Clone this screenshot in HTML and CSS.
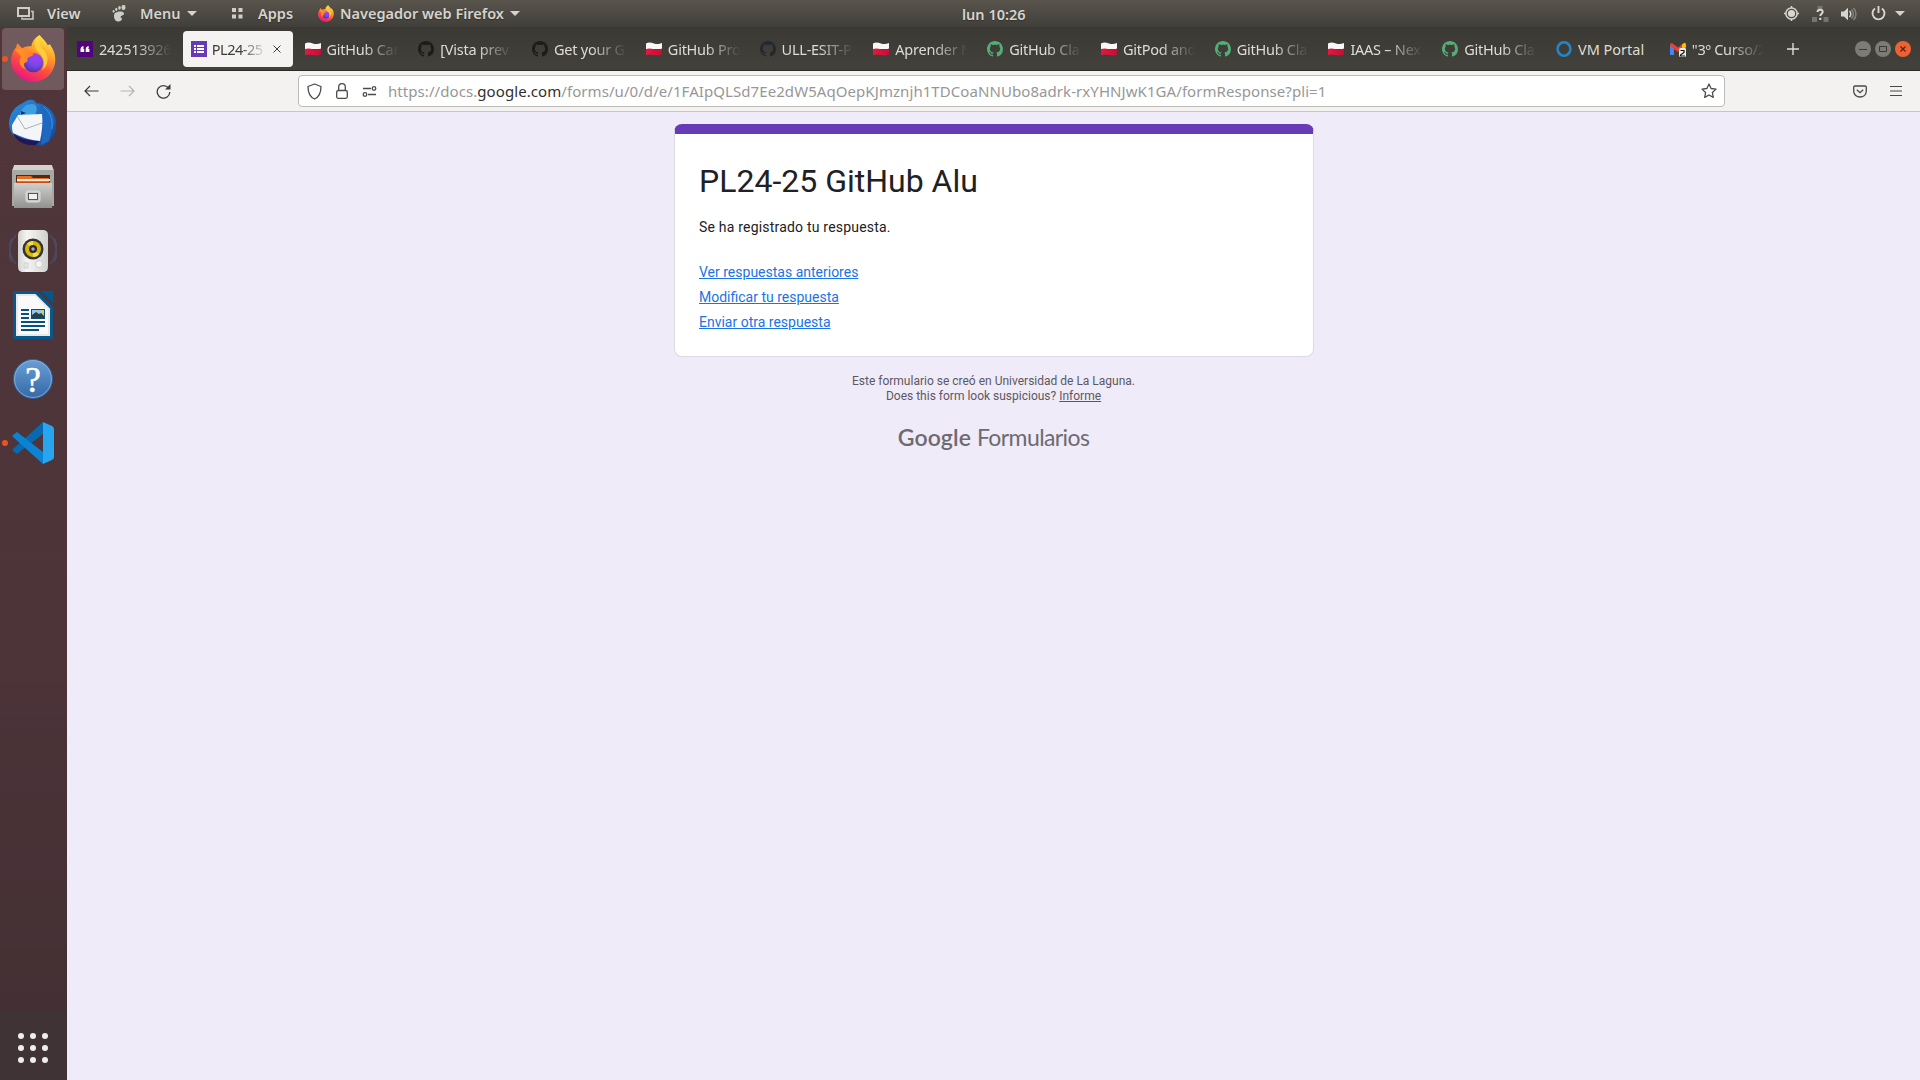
FILE: index.html
```
<!DOCTYPE html>
<html lang="es">
<head>
<meta charset="utf-8">
<title>PL24-25 GitHub Alu</title>
<link rel="stylesheet" href="styles.css">
</head>
<body>
<svg class="defs" width="0" height="0" aria-hidden="true">
  <defs>
    <linearGradient id="ff-body" x1="0.8" y1="0" x2="0.3" y2="1"><stop offset="0" stop-color="#fff14a"/><stop offset=".35" stop-color="#ffa02a"/><stop offset=".65" stop-color="#ff4b3e"/><stop offset="1" stop-color="#e5138a"/></linearGradient>
    <radialGradient id="ff-core" cx=".6" cy=".25" r=".8"><stop offset="0" stop-color="#a43df0"/><stop offset=".5" stop-color="#7a49e8"/><stop offset="1" stop-color="#4a2fa8"/></radialGradient>
    <linearGradient id="ff-fox" x1="0" y1="0" x2="1" y2="0"><stop offset="0" stop-color="#ff9a20"/><stop offset="1" stop-color="#ff7c2e"/></linearGradient>
    <linearGradient id="tb-body" x1="0" y1="0" x2="1" y2="1"><stop offset="0" stop-color="#2b8fdc"/><stop offset=".6" stop-color="#1c62b8"/><stop offset="1" stop-color="#173c8c"/></linearGradient>
    <linearGradient id="steel" x1="0" y1="0" x2="0" y2="1"><stop offset="0" stop-color="#cfcfcd"/><stop offset="1" stop-color="#929290"/></linearGradient>
    <linearGradient id="spk" x1="0" y1="0" x2="1" y2="0"><stop offset="0" stop-color="#d2d2d0"/><stop offset=".3" stop-color="#f5f5f4"/><stop offset="1" stop-color="#d0d0ce"/></linearGradient>
    <linearGradient id="help" x1="0" y1="0" x2="0" y2="1"><stop offset="0" stop-color="#6a9fd4"/><stop offset="1" stop-color="#3468a8"/></linearGradient>
    <linearGradient id="flag-red" x1="0" y1="0" x2="1" y2="0"><stop offset="0" stop-color="#e6173f"/><stop offset="1" stop-color="#c30f35"/></linearGradient>
    <symbol id="firefox" viewBox="0 0 44 46">
      <path d="M28 0c3 4 6 6 8 10l2-1c5 7 6 13 5 19-2 11-11 18-21 18S1 38 0 27c0-7 2-12 5-15l1-4 5 5c3-2 6-2 9-2 0-4 4-9 8-11z" fill="url(#ff-body)"/>
      <circle cx="22" cy="27" r="9.5" fill="url(#ff-core)"/>
      <path d="M4 14l7-1c3 1 5 4 8 4 2 0 3 1 3 2-1 2-5 2-6 4 0 2 1 3-2 4-2 1-2 4 1 7-7-3-8-8-5-13-2-2-4-4-6-7z" fill="url(#ff-fox)"/>
      <path d="M28 0c-8 7-5 14 0 18 4 4 6 10 2 17 9-7 6-17 1-21-3-4-4-8-3-14z" fill="#ffd83a" opacity=".8"/>
    </symbol>
    <symbol id="github" viewBox="0 0 16 16"><path fill="currentColor" d="M8 0C3.58 0 0 3.58 0 8c0 3.54 2.29 6.53 5.47 7.59.4.07.55-.17.55-.38 0-.19-.01-.82-.01-1.49-2.01.37-2.53-.49-2.69-.94-.09-.23-.48-.94-.82-1.13-.28-.15-.68-.52-.01-.53.63-.01 1.08.58 1.23.82.72 1.21 1.87.87 2.33.66.07-.52.28-.87.51-1.07-1.78-.2-3.64-.89-3.64-3.95 0-.87.31-1.59.82-2.15-.08-.2-.36-1.02.08-2.12 0 0 .67-.21 2.2.82.64-.18 1.32-.27 2-.27s1.36.09 2 .27c1.53-1.04 2.2-.82 2.2-.82.44 1.1.16 1.92.08 2.12.51.56.82 1.27.82 2.15 0 3.07-1.87 3.75-3.65 3.95.29.25.54.73.54 1.48 0 1.07-.01 1.93-.01 2.2 0 .21.15.46.55.38A8.01 8.01 0 0 0 16 8c0-4.42-3.58-8-8-8z"/></symbol>
    <symbol id="flag" viewBox="0 0 16 16"><path d="M0 2.500c3-1.500 5-.8 8 0s5 .7 8-.5v6H0z" fill="#f8f8f8"/><path d="M0 8c3-1 5-.5 8 .2s5 .4 8-.7v6c-3 1.300-5 1-8 .5s-5-1-8 .2z" fill="url(#flag-red)"/></symbol>
  </defs>
</svg>

<header class="topbar">
  <div class="topbar-left">
    <svg class="ic-view" width="17" height="14" viewBox="0 0 17 14" fill="none" stroke="#cfcdc7" stroke-width="1.500"><rect x="1" y="1" width="11" height="8" stroke-width="2"/><path d="M14 4.500h2V12H5v-1.500"/></svg>
    <span class="t-view">View</span>
    <svg class="ic-foot" width="14" height="17" viewBox="0 0 14 17" fill="#cfcdc7"><ellipse cx="11.500" cy="2.500" rx="2" ry="2.600"/><ellipse cx="7.500" cy="2.800" rx="1.300" ry="1.900"/><ellipse cx="4.300" cy="4.300" rx="1.100" ry="1.600"/><ellipse cx="1.600" cy="6.300" rx="1" ry="1.400"/><path d="M3 8c2-2 9-2.500 9 .5 0 2-3 2-3.500 3.500-.3 1 1.300.5 1.500 1.500 0 2-2.500 3.500-4.500 3C2 16 1 10 3 8z"/></svg>
    <span class="t-menu">Menu</span>
    <i class="caret"></i>
    <svg class="ic-apps" width="11" height="11" viewBox="0 0 11 11" fill="#cfcdc7"><path d="M0 0h4v4H0zM6.500 0h4v4h-4zM0 6.500h4v4H0zM6.500 6.500h4v4h-4z"/></svg>
    <span class="t-apps">Apps</span>
    <svg class="ic-ff" width="16" height="17"><use href="#firefox"/></svg>
    <span class="t-nav">Navegador web Firefox</span>
    <i class="caret"></i>
  </div>
  <span class="clock">lun 10:26</span>
  <div class="tray">
    <svg width="15" height="15" viewBox="0 0 15 15"><circle cx="7.500" cy="7.500" r="5.600" fill="none" stroke="#d8d6d0" stroke-width="1.500"/><circle cx="7.500" cy="7.500" r="3.600" fill="#d8d6d0"/><path d="M7.500 0v2M7.500 13v2M0 7.500h2M13 7.500h2" stroke="#d8d6d0" stroke-width="1.500"/></svg>
    <svg class="net" width="17" height="16" viewBox="0 0 17 16"><path d="M5.500 0h5v3h-5zM0 11h5v5H0zM11.500 11h5v5h-5z" fill="#77756f"/><path d="M5.500 6c.2-3.300 5.500-3 5.200 0-.2 1.700-2.400 1.900-2.400 4M8.300 11.800V14" stroke="#dad8d2" stroke-width="2" fill="none"/></svg>
    <svg class="vol" width="16" height="14" viewBox="0 0 16 14"><path d="M0 4.500h3L7 .8v12.400L3 9.500H0z" fill="#d8d6d0"/><path d="M8.500 4c1.700 1.600 1.700 4.400 0 6" stroke="#d8d6d0" stroke-width="1.500" fill="none"/><path d="M10.500 2.500c2.500 2.500 2.500 6.500 0 9M12.500 1c3.300 3.300 3.300 8.700 0 12" stroke="#85837c" stroke-width="1.500" fill="none"/></svg>
    <svg class="pow" width="15" height="15" viewBox="0 0 15 15" fill="none" stroke="#d8d6d0" stroke-width="1.900"><path d="M4 2.500a6 6 0 1 0 7 0M7.500 0v7"/></svg>
    <i class="caret"></i>
  </div>
</header>

<div class="desktop">
  <nav class="dock">
    <div class="app active"><i class="run"></i><svg width="45" height="47"><use href="#firefox"/></svg></div>
    <div class="app"><svg width="48" height="48" viewBox="0 0 48 48">
      <path d="M17 2c6-3 10 0 10 2C40 6 49 16 47 28c0 8-5 14-13 19l-4-1C12 45 1 38 0 25 0 14 7 7 12 5z" fill="url(#tb-body)"/>
      <path d="M23 5c6 0 6 7 2 12L10 22c-1-5 2-12 7-16z" fill="#3b9fe0"/><path d="M12 12l5 2-5 2z" fill="#1a335e"/>
      <path d="M30 4c10 3 15 11 15 20l-5 18-8 4 2-15-1-14z" fill="#1d69c0"/><path d="M35 8c6 5 9 12 8 22" stroke="#3a91df" fill="none"/>
      <path d="M4 34c7 6 17 8 27 8l-4 4C15 47 7 42 4 34z" fill="#221654"/>
      <path d="M3 26l6-10 24-1c1 9 0 18-2 27-10-1-19-4-27-8-1-3-1-6-1-8z" fill="#f4f5f6"/><path d="M8 17l8 13 17-6" fill="none" stroke="#aab2ba"/></svg></div>
    <div class="app"><svg width="42" height="44" viewBox="0 0 42 44">
      <path d="M2 1h38l2 4v36H0V5z" fill="#a8a8a6"/><path d="M2 0h38l1 5H1z" fill="#d2d2d0"/><path d="M4 10h34v9H4z" fill="#4c2c19"/><path d="M5 11h14l2 2h16v7H5z" fill="#e46d22"/><path d="M5 14h33v2H5z" fill="#fbe8cf"/><path d="M4 17h34v2H4z" fill="#c84c15"/>
      <path d="M2 18h38v25H2z" fill="url(#steel)"/><rect x="14" y="26" width="14" height="11" rx="2" fill="#c9c9c7" stroke="#dededd"/><rect x="16.500" y="28.500" width="9" height="6" fill="#f1f1f0" stroke="#555"/></svg></div>
    <div class="app"><svg width="48" height="44" viewBox="0 0 48 44">
      <path d="M7 6c-8 9-8 20 0 29M3 9c-4 8-4 17 0 24M41 6c8 9 8 20 0 29M45 9c4 8 4 17 0 24" stroke="#4b4a63" stroke-width="1.500" fill="none"/>
      <path d="M13 1h22c4 1 4 3 4 8v27c0 5-1 7-5 7H14c-4 0-5-2-5-7V9c0-5 0-7 4-8z" fill="url(#spk)"/><circle cx="24" cy="20" r="10.500" fill="#343434"/><circle cx="24" cy="20" r="8" fill="#d8b50b"/><path d="M24 20L18 14.500a8 8 0 0 1 6-2.500zM24 20l6 5.500a8 8 0 0 1-6 2.500z" fill="#f6dc4b"/><circle cx="24" cy="20" r="4" fill="#2a2b2c"/><circle cx="24" cy="20" r="1.700" fill="#a9b0b3"/><circle cx="30" cy="35" r="3.500" fill="#f4f4f3" stroke="#cfcfcd"/><rect x="15" y="34" width="4" height="5" fill="#e4e4e2" stroke="#d2d2d0"/></svg></div>
    <div class="app"><svg width="40" height="48" viewBox="0 0 40 48">
      <path d="M2 0h22l16 16v30q0 2-2 2H2q-2 0-2-2V2q0-2 2-2z" fill="#09588d"/><path d="M27 0h13v12z" fill="#06558b"/><path d="M3 3h19.500L37 17.500V45H3z" fill="#e9e9e8"/><path d="M5 5h17l13 13v25H5z" fill="#fafafa"/><path d="M8 18h8v2H8zM8 22h8v2H8zM8 26h8v2H8zM8 30h24v2H8zM8 34h24v2H8zM8 38h18v2H8z" fill="#08507f"/><path d="M18 18h14v10H18z" fill="#08507f"/><path d="M19 19h12v8H19z" fill="#8ecbed"/><path d="M19 27v-3l4-3 3 2 2-1 3 3v2z" fill="#363b3c"/><circle cx="29.500" cy="20.500" r="1.500" fill="#eecb38"/></svg></div>
    <div class="app"><svg width="40" height="40" viewBox="0 0 40 40"><circle cx="20" cy="20" r="19.500" fill="url(#help)" stroke="#315f99"/><circle cx="20" cy="20" r="18.400" fill="none" stroke="#8bb5df" stroke-width=".8"/><text class="q" x="20" y="33" text-anchor="middle">?</text></svg></div>
    <div class="app"><i class="run"></i><svg width="42" height="42" viewBox="0 0 42 42"><path d="M31 0v12L5 32l-4-3q-1-1 0-2z" fill="#0769b0"/><path d="M31 42V30L5 10l-4 3q-1 1 0 2z" fill="#0a84d2"/><path d="M31 0l9 4q2 1 2 3v28q0 2-2 3l-9 4z" fill="#27a6ef"/></svg></div>
    <div class="show-apps"><i></i><i></i><i></i><i></i><i></i><i></i><i></i><i></i><i></i></div>
  </nav>

  <div class="window">
    <div class="tabs">
      <div class="tab"><svg viewBox="0 0 16 16"><path d="M0 0h16v16H0z" fill="#54047a"/><path d="M3.500 11V8.500C3.500 6.500 4.500 5.300 6.500 5v2l-.8.800h1.500V11zM8.700 11V8.500c0-2 1-3.200 3-3.500v2l-.8.800h1.500V11z" fill="#fff"/></svg><span class="label">242513926</span></div>
      <div class="tab selected"><svg viewBox="0 0 16 16"><path d="M0 0h16v16H0z" fill="#673ab7"/><path d="M3 4h2v2H3zM6 4h7v2H6zM3 7h2v2H3zM6 7h7v2H6zM3 10h2v2H3zM6 10h7v2H6z" fill="#fff"/></svg><span class="label">PL24-25</span><svg class="close" viewBox="0 0 8 8"><path d="M.5.5l7 7M7.500.5l-7 7" stroke="#3c3c3c" stroke-width="1"/></svg></div>
      <div class="tab"><svg><use href="#flag"/></svg><span class="label">GitHub Car</span></div>
      <div class="tab gh-black"><svg><use href="#github"/></svg><span class="label">[Vista prev</span></div>
      <div class="tab gh-black"><svg><use href="#github"/></svg><span class="label">Get your G</span></div>
      <div class="tab"><svg><use href="#flag"/></svg><span class="label">GitHub Pro</span></div>
      <div class="tab gh-navy"><svg><use href="#github"/></svg><span class="label">ULL-ESIT-P</span></div>
      <div class="tab"><svg><use href="#flag"/></svg><span class="label">Aprender N</span></div>
      <div class="tab gh-green"><svg><use href="#github"/></svg><span class="label">GitHub Cla</span></div>
      <div class="tab"><svg><use href="#flag"/></svg><span class="label">GitPod and</span></div>
      <div class="tab gh-green"><svg><use href="#github"/></svg><span class="label">GitHub Cla</span></div>
      <div class="tab"><svg><use href="#flag"/></svg><span class="label">IAAS – Nex</span></div>
      <div class="tab gh-green"><svg><use href="#github"/></svg><span class="label">GitHub Cla</span></div>
      <div class="tab"><svg viewBox="0 0 16 16"><ellipse cx="8" cy="8" rx="6.400" ry="6.700" fill="none" stroke="#2585c7" stroke-width="2.600"/></svg><span class="label full">VM Portal</span></div>
      <div class="tab"><svg viewBox="0 0 16 16"><path d="M0 4v10h4V7z" fill="#4285f4"/><path d="M12 7v7h4V4z" fill="#34a853"/><path d="M0 4q0-2 2-2l6 4.500L14 2v4L8 11 0 5z" fill="#e94235"/><path d="M12 3.500Q16 0 16 4v2l-4 2.500z" fill="#fbbc04"/><rect x="9" y="7" width="7" height="9" rx="1.500" fill="#e9eee9"/><path d="M10.500 9.500h3.500v2l-3.500 2.500V15h4.500" fill="none" stroke="#111" stroke-width="1.200"/></svg><span class="label">"3º Curso/2</span></div>
      <svg class="plus" viewBox="0 0 12 12"><path d="M6 0v12M0 6h12" stroke="#e0ded6" stroke-width="1.400"/></svg>
      <div class="controls">
        <svg viewBox="0 0 16 16"><circle cx="8" cy="8" r="8" fill="#7d7b75"/><path d="M4 8.500h8" stroke="#3a3935"/></svg>
        <svg viewBox="0 0 16 16"><circle cx="8" cy="8" r="8" fill="#7d7b75"/><path d="M4.500 5.500h7v5h-7z" fill="none" stroke="#3a3935"/></svg>
        <svg viewBox="0 0 16 16"><circle cx="8" cy="8" r="8" fill="#ee6132"/><path d="M5.500 5.500l5 5M10.500 5.500l-5 5" stroke="#5b2010" stroke-width="1.200"/></svg>
      </div>
    </div>

    <div class="toolbar">
      <div class="nav-buttons">
        <svg width="15" height="12" viewBox="0 0 15 12" fill="none" stroke="#3b3b3b" stroke-width="1.200"><path d="M14.500 6H1M6 1L1 6l5 5"/></svg>
        <svg width="15" height="12" viewBox="0 0 15 12" fill="none" stroke="#b4b3b1" stroke-width="1.200"><path d="M.5 6H14M9 1l5 5-5 5"/></svg>
        <svg width="15" height="15" viewBox="0 0 15 15" fill="none" stroke="#3b3b3b" stroke-width="1.300"><path d="M12.500 4A6.300 6.300 0 1 0 13.800 8"/><path d="M9 5.500h5.500V0z" fill="#3b3b3b" stroke="none"/></svg>
      </div>
      <div class="urlbar">
        <svg width="15" height="17" viewBox="0 0 15 17" fill="none" stroke="#4b4b4b" stroke-width="1.300"><path d="M7.500 1L1 3.500C1 10 3 14 7.500 16 12 14 14 10 14 3.500z" stroke-linejoin="round"/></svg>
        <svg class="lock" width="12" height="16" viewBox="0 0 12 16" fill="none" stroke="#4b4b4b" stroke-width="1.300"><rect x=".7" y="7.500" width="10.600" height="7.800" rx="1.500"/><path d="M2.700 7.500V4a3.300 3.300 0 0 1 6.600 0v3.500"/></svg>
        <svg class="perm" width="15" height="11" viewBox="0 0 15 11" fill="none" stroke="#4b4b4b" stroke-width="1.300"><path d="M1 2.500h8M6 8.500h8"/><circle cx="12" cy="2.500" r="1.800"/><circle cx="3" cy="8.500" r="1.800"/></svg>
        <span class="url">https://docs.<b>google.com</b>/forms/u/0/d/e/1FAIpQLSd7Ee2dW5AqOepKJmznjh1TDCoaNNUbo8adrk-rxYHNJwK1GA/formResponse?pli=1</span>
        <svg class="star" width="16" height="16" viewBox="0 0 16 16" fill="none" stroke="#4b4b4b" stroke-width="1.300" stroke-linejoin="round"><path d="M8 1l2.100 4.500 4.900.6-3.600 3.400.9 4.900L8 12l-4.300 2.400.9-4.900L1 6.100l4.900-.6z"/></svg>
      </div>
      <svg class="pocket" width="14" height="13" viewBox="0 0 14 13" fill="none" stroke="#484848" stroke-width="1.300"><path d="M2 1h10q1.300 0 1.300 1.300V6c0 8-12.600 8-12.600 0V2.300Q.7 1 2 1z"/><path d="M3.800 4.700L7 7.700l3.200-3"/></svg>
      <svg class="burger" width="12" height="10" viewBox="0 0 12 10"><path d="M0 .5h12M0 5h12M0 9.500h12" stroke="#484848" stroke-width="1.200"/></svg>
    </div>

    <main class="page">
      <section class="card">
        <h1>PL24-25 GitHub Alu</h1>
        <p>Se ha registrado tu respuesta.</p>
        <div class="links"><a>Ver respuestas anteriores</a><a>Modificar tu respuesta</a><a>Enviar otra respuesta</a></div>
      </section>
      <footer class="legal">Este formulario se creó en Universidad de La Laguna.<br>Does this form look suspicious? <u>Informe</u></footer>
      <div class="brand"><span class="g">Google</span><span class="f">Formularios</span></div>
    </main>
  </div>
</div>
</body>
</html>
```
FILE: styles.css
```
* { box-sizing: border-box; }
body { margin: 0; width: 1920px; height: 1080px; overflow: hidden; font-family: "Noto Sans", sans-serif; display: flex; flex-direction: column; }
svg { display: block; flex: none; }
.defs { position: absolute; }

/* Desktop panel */
.topbar { height: 27px; flex: none; display: grid; grid-template-columns: 962px 66px 1fr; align-items: center; background: linear-gradient(#59554d, #403f3a); color: #d6d4ce; font-size: 14.5px; font-weight: 600; line-height: 27px; white-space: nowrap; text-shadow: 0 1px 1px #33312c; }
.topbar-left { display: flex; align-items: center; padding-left: 17px; }
.caret { width: 0; height: 0; border: 5px solid transparent; border-top: 5px solid #d5d3cd; border-bottom: 0; flex: none; }
.t-view { width: 65px; margin-left: 13px; }
.t-menu { width: 47px; margin-left: 14px; }
.ic-apps { margin-left: 35px; }
.t-apps { width: 60px; margin-left: 15px; }
.t-nav { width: 170px; margin-left: 6px; }
.clock { line-height: 26px; }
.tray { display: flex; align-items: center; justify-content: flex-end; padding-right: 15px; }
.net { margin-left: 13px; }
.vol { margin-left: 12px; }
.pow { margin: 0 9px 0 14px; }

.desktop { flex: 1; display: flex; min-height: 0; }

/* Dock */
.dock { width: 67px; flex: none; display: flex; flex-direction: column; background: linear-gradient(#503639, #4c3439 60%, #443034 93.3%, #403335 93.4%, #3f3335); padding-top: 1px; }
.app { position: relative; width: 62px; height: 62px; margin: 0 0 2px 2px; display: flex; align-items: center; justify-content: center; border-radius: 4px; }
.app.active { background: #715a5d; padding-bottom: 2px; }
.run { position: absolute; left: 0; top: 28px; width: 6px; height: 6px; border-radius: 50%; background: #e95420; }
.q { font: 35px "Liberation Serif", serif; fill: #fff; stroke: #fff; stroke-width: .6px; }
.show-apps { margin: auto 0 17px 18px; display: grid; grid-template-columns: repeat(3, 6px); gap: 6px; }
.show-apps i { width: 6px; height: 6px; border-radius: 50%; background: #eeeeec; }

/* Browser */
.window { flex: 1; min-width: 0; display: flex; flex-direction: column; }
.tabs { height: 44px; flex: none; display: flex; align-items: center; padding: 0 9px 0 0; background: linear-gradient(#3a3934, #42413c); border-bottom: 1px solid #2b2a27; color: #dfdcd2; }
.tab { width: 109.770px; height: 36px; margin: 0 2px; flex: none; padding: 0 6px 0 8px; display: flex; align-items: center; gap: 6px; }
.tab svg { width: 16px; height: 16px; }
.label { flex: 1; min-width: 0; overflow: hidden; white-space: nowrap; font-size: 14.5px; line-height: 20px; padding-top: 1px; letter-spacing: -.25px; -webkit-mask-image: linear-gradient(90deg, #000 50%, transparent 98%); mask-image: linear-gradient(90deg, #000 50%, transparent 98%); }
.label.full { -webkit-mask-image: none; mask-image: none; letter-spacing: 0; }
.selected { background: #f4f3f1; color: #3b3b3b; border-radius: 4px; padding: 0 12px 0 8px; gap: 5px; }
.selected .label { letter-spacing: -.5px; }
.tab .close { width: 8px; height: 8px; }
.gh-black svg { color: #1c1c1b; }
.gh-navy svg { color: #24292e; }
.gh-green svg { color: #56ab77; }
.tabs .plus { width: 12px; height: 12px; margin-left: 14px; }
.controls { margin-left: auto; display: flex; gap: 4px; }
.controls svg { width: 16px; height: 16px; }
.toolbar { height: 41px; flex: none; display: flex; align-items: center; background: #f3f2f0; border-bottom: 1px solid #c8c6c4; padding: 0 18px 0 17px; }
.nav-buttons { width: 214px; display: flex; align-items: center; gap: 21px; }
.urlbar { width: 1427px; height: 32px; display: flex; align-items: center; background: #fff; border: 1px solid #bdbbb8; border-radius: 4px; padding: 0 7px 0 8px; }
.lock { margin-left: 14px; }
.perm { margin: 0 11px 0 14px; }
.url { flex: 1; font-size: 15px; letter-spacing: .07px; color: #979797; white-space: nowrap; }
.url b { color: #303030; font-weight: 400; }
.pocket { margin-left: auto; }
.burger { margin-left: 23px; }

/* Form page */
.page { flex: 1; background: #f0ebf8; font-family: Roboto, sans-serif; display: flex; flex-direction: column; align-items: center; padding-top: 12px; }
.card { width: 640px; height: 233px; margin-left: 1px; background: #fff; border: 1px solid #dadce0; border-top: 10px solid #673ab7; border-radius: 8px; padding: 26px 24px 0; color: #202124; }
.card h1 { margin: 0; font-size: 32px; font-weight: 400; line-height: 43px; }
.card p { margin: 14px 0 0; font-size: 14px; line-height: 20px; letter-spacing: .2px; }
.links { margin-top: 23px; display: flex; flex-direction: column; align-items: flex-start; font-size: 14px; line-height: 25px; color: #1a73e8; }
.links a { text-decoration: underline; }
.legal { margin-top: 17px; font-size: 12px; line-height: 15px; text-align: center; color: #5c5862; }
.brand { margin-top: 18px; display: flex; gap: 6px; font-family: Lato, sans-serif; font-size: 23px; line-height: 30px; color: #6d6a71; white-space: nowrap; }
.brand .g { font-weight: 600; letter-spacing: .1px; }
.brand .f { letter-spacing: -.6px; }
```
